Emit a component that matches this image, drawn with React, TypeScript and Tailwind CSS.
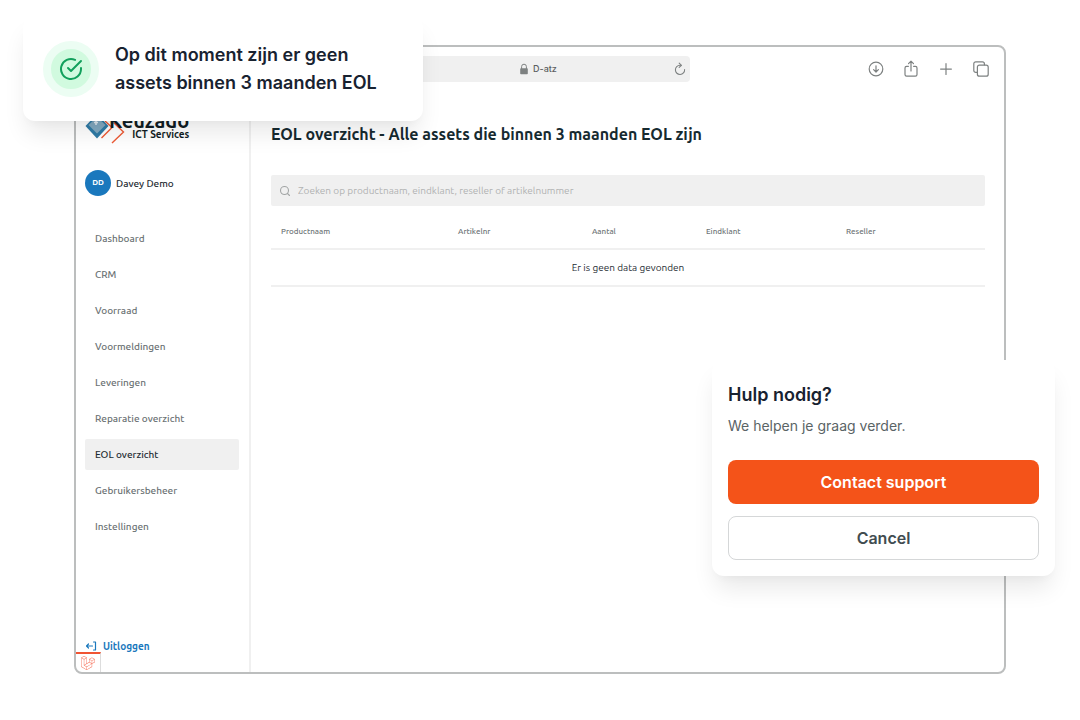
import React from "react";
import { SiLaravel } from "react-icons/si";

const menuItems = [
  "Dashboard",
  "CRM",
  "Voorraad",
  "Voormeldingen",
  "Leveringen",
  "Reparatie overzicht",
  "EOL overzicht",
  "Gebruikersbeheer",
  "Instellingen",
];

const columns = [
  { name: "Productnaam", width: "w-[177px]" },
  { name: "Artikelnr", width: "w-[134px]" },
  { name: "Aantal", width: "w-[114px]" },
  { name: "Eindklant", width: "w-[140px]" },
  { name: "Reseller", width: "" },
];

const iconProps = {
  fill: "none",
  stroke: "currentColor",
  strokeLinecap: "round" as const,
  strokeLinejoin: "round" as const,
  "aria-hidden": true,
};

const Toolbar = () => {
  return (
    <div className="grid grid-cols-[1fr_300px_1fr] items-center h-11 px-3 text-[#7d8181]">
      <div />
      {/* address bar */}
      <div className="relative flex items-center justify-center gap-1 h-[26px] rounded bg-[#f0f0f0]">
        <svg className="w-2.5 h-3" viewBox="0 0 10 12" {...iconProps}>
          <path d="M2.6 6V3.6a2.4 2.4 0 0 1 4.8 0V6" strokeWidth="1" />
          <rect x="1.2" y="5.3" width="7.6" height="5.9" rx="0.8" fill="currentColor" stroke="none" />
        </svg>
        <input
          aria-label="Adres"
          className="w-7 bg-transparent text-[9px] leading-3 font-medium text-[#5c6060] outline-none"
          defaultValue="D-atz"
        />
        <button aria-label="Vernieuwen" className="absolute right-1 top-1.5">
          <svg className="w-3 h-3.5" viewBox="0 0 12 14" {...iconProps} strokeWidth="1.1">
            <path d="M10.6 7.6A4.6 4.6 0 1 1 6 3.3h1.2" />
            <path d="M5.2 1.2l2.2 2.1-2.2 2.1" />
          </svg>
        </button>
      </div>
      <div className="flex justify-end gap-[17px] pr-0.5">
        <button aria-label="Downloads">
          <svg className="w-[18px] h-[18px]" viewBox="0 0 18 18" {...iconProps} strokeWidth="1.2">
            <circle cx="9" cy="9" r="6.8" />
            <path d="M9 5.8v6M6.6 9.6L9 12l2.4-2.4" />
          </svg>
        </button>
        <button aria-label="Delen">
          <svg className="w-[18px] h-[18px]" viewBox="0 0 18 18" {...iconProps} strokeWidth="1.2">
            <path d="M6.4 6.3H4.6A1.6 1.6 0 0 0 3 7.9v6.7a1.6 1.6 0 0 0 1.6 1.6h8.8a1.6 1.6 0 0 0 1.6-1.6V7.9a1.6 1.6 0 0 0-1.6-1.6h-1.8" />
            <path d="M9 11V1.2M6.5 3.6L9 1.1l2.5 2.5" />
          </svg>
        </button>
        <button aria-label="Nieuw tabblad">
          <svg className="w-[18px] h-[18px]" viewBox="0 0 18 18" {...iconProps} strokeWidth="1.2">
            <path d="M9 3.7v10.8M3.6 9.1h10.8" />
          </svg>
        </button>
        <button aria-label="Tabbladen">
          <svg className="w-[18px] h-[18px]" viewBox="0 0 18 18" {...iconProps} strokeWidth="1.2">
            <path d="M5.2 12.4H3.8a2 2 0 0 1-2-2V3.8a2 2 0 0 1 2-2h6.6a2 2 0 0 1 2 2v1" />
            <rect x="5.4" y="5.2" width="10.8" height="11" rx="2" />
          </svg>
        </button>
      </div>
    </div>
  );
};

const Logo = () => {
  return (
    <div className="flex h-[42px] font-bold text-[#111d24]">
      <svg className="w-[42px] h-[42px] shrink-0" viewBox="0 0 42 42" fill="none" aria-hidden="true">
        <path d="M12 11l11.5 12L12 35.5 0.5 23z" fill="#2f7ba6" />
        <path d="M12 14l8.5 8L12 30.5 3.5 22z" fill="#82a9c0" />
        <path d="M11 17v5M9 19.5h4" stroke="#dfe9ef" strokeWidth="1.5" />
        <path d="M16.5 35l10.5-10.5-7-6.5M27 40l11.5-11-10-9.5" stroke="#ee5a35" strokeWidth="1.4" />
      </svg>
      <div className="flex flex-col items-end justify-end pb-1 -ml-[18px]">
        <span className="text-xl leading-4">Keuzado</span>
        <span className="text-[10px] leading-3">ICT Services</span>
      </div>
    </div>
  );
};

const Sidebar = () => {
  return (
    <div className="flex flex-col w-[175px] shrink-0 pl-[9px] pr-2.5 pt-3 border-r-2 border-[#f0f0f0]">
      <Logo />

      {/* user info */}
      <div className="flex items-center gap-[5px] mt-[25px]">
        <div className="flex items-center justify-center w-[26px] h-[26px] rounded-full bg-[#1a78bd] text-[8px] font-bold text-white">
          DD
        </div>
        <p className="text-[10px] font-medium text-[#1f2d33]">Davey Demo</p>
      </div>

      <nav className="flex flex-col gap-[5px] mt-[27px]">
        {menuItems.map((item) => (
          <a
            key={item}
            href="#"
            className={
              item === "EOL overzicht"
                ? "flex items-center h-[31px] px-2.5 rounded-xs bg-[#f0f0f0] text-[10px] font-medium text-[#1f2d33]"
                : "flex items-center h-[31px] px-2.5 rounded-xs text-[10px] font-medium text-[#6b7274]"
            }
          >
            {item}
          </a>
        ))}
      </nav>

      <a
        href="#"
        className="flex items-center gap-1.5 mt-auto h-3 text-[10px] font-bold text-[#1a78bd]"
      >
        <svg className="w-3 h-3" viewBox="0 0 12 12" {...iconProps} strokeWidth="1.2">
          <path d="M7.5 6h-6M3.5 4l-2 2 2 2M8.5 2h2v8h-2" />
        </svg>
        Uitloggen
      </a>
      {/* debug bar */}
      <button
        aria-label="Laravel debugbar"
        className="flex items-center justify-center -ml-[9px] w-[25px] h-5 border-t-2 border-r border-t-[#f05433] border-r-[#dddddd] text-[#f66f58]"
      >
        <SiLaravel className="w-3.5 h-3.5" />
      </button>
    </div>
  );
};

const Overview = () => {
  return (
    <div className="flex-1 min-w-0 pl-5 pr-[19px] pt-[31px]">
      <h1 className="text-base font-bold text-[#162a30]">
        EOL overzicht - Alle assets die binnen 3 maanden EOL zijn
      </h1>

      <label className="flex items-center gap-[7px] h-[31px] mt-[29px] px-2 rounded-xs bg-[#f0f0f0] text-[#a3a6a6]">
        <svg className="w-3 h-3" viewBox="0 0 12 12" {...iconProps} strokeWidth="1.1">
          <circle cx="5.5" cy="5.5" r="4" />
          <path d="M8.5 8.5l2 2" />
        </svg>
        <input
          aria-label="Zoeken"
          className="flex-1 bg-transparent text-[10px] outline-none placeholder:text-[#b0b2b2]"
          placeholder="Zoeken op productnaam, eindklant, reseller of artikelnummer"
        />
      </label>

      <table className="w-full mt-2.5 table-fixed">
        <thead>
          <tr className="h-[33px] border-b-2 border-[#f0f0f0]">
            {columns.map((column) => (
              <th
                key={column.name}
                className={`${column.width} px-2.5 text-left text-[8px] font-medium text-[#6f7678]`}
              >
                {column.name}
              </th>
            ))}
          </tr>
        </thead>
        <tbody>
          <tr className="h-[37px] border-b-2 border-[#f0f0f0]">
            <td colSpan={5} className="text-center text-[10px] text-[#1f2d33]">
              Er is geen data gevonden
            </td>
          </tr>
        </tbody>
      </table>
    </div>
  );
};

const Toast = () => {
  return (
    <div
      role="status"
      className="absolute left-[23px] top-4 flex items-center gap-4 w-[400px] px-5 pt-[25px] pb-6 rounded-xl bg-white shadow-[0_16px_24px_-4px_rgba(0,0,0,0.09),0_6px_8px_-4px_rgba(0,0,0,0.03)]"
    >
      <div className="flex items-center justify-center w-14 h-14 rounded-full border-8 border-[#ecfdf3] bg-[#d1fadf] text-[#12a05c]">
        <svg className="w-6 h-6" viewBox="0 0 24 24" {...iconProps} strokeWidth="2">
          <path d="M22 11.08V12a10 10 0 1 1-5.93-9.14" />
          <path d="M22 4L12 14.01l-3-3" />
        </svg>
      </div>
      <p className="flex-1 text-lg leading-7 font-semibold text-[#182230]">
        Op dit moment zijn er geen
        <br />
        assets binnen 3 maanden EOL
      </p>
    </div>
  );
};

const HelpCard = () => {
  return (
    <div className="absolute right-[25px] top-[360px] w-[343px] px-4 pt-[21px] pb-4 rounded-xl bg-white shadow-[0_16px_24px_-4px_rgba(0,0,0,0.09),0_6px_8px_-4px_rgba(0,0,0,0.03)]">
      <h2 className="text-lg leading-7 font-semibold text-[#182230]">Hulp nodig?</h2>
      <p className="mt-[7px] text-sm text-[#5a6466]">We helpen je graag verder.</p>
      <div className="flex flex-col gap-3 mt-6">
        <button className="h-11 rounded-lg bg-[#f45319] text-base font-semibold text-white">
          Contact support
        </button>
        <button className="h-11 rounded-lg border border-[#d5d7d8] bg-white text-base font-semibold text-[#414c50]">
          Cancel
        </button>
      </div>
    </div>
  );
};

const App = () => {
  return (
    <div className="relative flex min-h-screen pt-[45px] pb-[46px] px-[74px] bg-white font-['Inter',sans-serif]">
      {/* browser window */}
      <div className="flex flex-col flex-1 border-2 border-[#bcbebe] rounded-lg overflow-hidden bg-white">
        <Toolbar />
        <div className="flex flex-1 font-['Ubuntu','Noto_Sans',sans-serif]">
          <Sidebar />
          <Overview />
        </div>
      </div>
      <Toast />
      <HelpCard />
    </div>
  );
};

export default App;
